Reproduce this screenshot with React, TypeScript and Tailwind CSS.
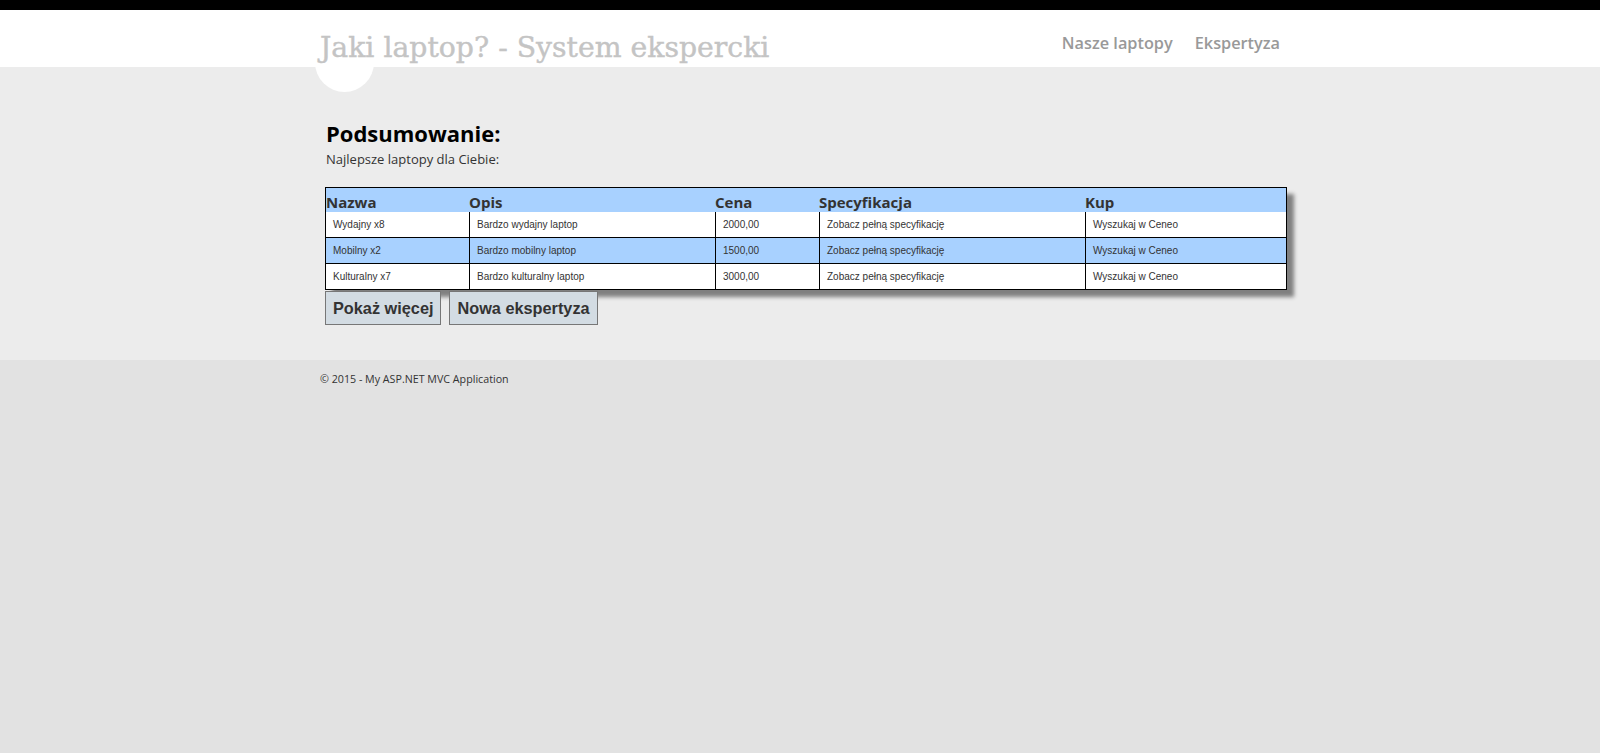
import React from "react";

const rows = [
  { name: "Wydajny x8", desc: "Bardzo wydajny laptop", price: "2000,00", alt: false },
  { name: "Mobilny x2", desc: "Bardzo mobilny laptop", price: "1500,00", alt: true },
  { name: "Kulturalny x7", desc: "Bardzo kulturalny laptop", price: "3000,00", alt: false },
];

const cols = "grid grid-cols-[143px_246px_104px_266px_199px]";

export default function App() {
  return (
    <div className="min-h-screen flex flex-col bg-[#e2e2e2]" style={{ fontFamily: "'Open Sans', sans-serif" }}>
      <div className="h-[10px] bg-black" />
      <header className="h-[57px] bg-white relative">
        <div className="w-[960px] mx-auto h-full flex justify-between relative">
          <div className="absolute left-[-5px] top-[23px] w-[59px] h-[59px] rounded-full bg-white" />
          <div
            className="relative mt-[20px] text-[28.3px] leading-[36px] text-[#c4c4c4] whitespace-nowrap [-webkit-text-stroke:0.4px_#c4c4c4]"
            style={{ fontFamily: "'DejaVu Serif', serif" }}
          >
            Jaki laptop? - System ekspercki
          </div>
          <nav className="flex gap-[22px] mt-[21px] text-[16.3px] leading-[24px] font-semibold text-[#999]">
            <span>Nasze laptopy</span>
            <span>Ekspertyza</span>
          </nav>
        </div>
      </header>
      <main className="bg-[#ececec] h-[293px]">
        <div className="w-[960px] mx-auto px-[5px] pt-[52px]">
          <h1 className="text-[22px] leading-[28px] font-bold text-black pl-[1px]">Podsumowanie:</h1>
          <p className="text-[13px] leading-[18px] text-[#333] pl-[1px] mt-[3px]">Najlepsze laptopy dla Ciebie:</p>
          <div className="mt-[19px] w-[962px] border border-black bg-white shadow-[7px_7px_4px_#808080]">
            <div className={`${cols} bg-[#a8d1ff] h-[24px] items-end text-[15px] leading-[20px] font-bold text-[#333]`}>
              <div>Nazwa</div>
              <div>Opis</div>
              <div>Cena</div>
              <div>Specyfikacja</div>
              <div>Kup</div>
            </div>
            {rows.map((r, i) => (
              <div
                key={r.name}
                className={`${cols} ${i > 0 ? "border-t border-black h-[26px]" : "h-[25px]"} ${r.alt ? "bg-[#a8d1ff]" : "bg-white"} text-[10px] text-[#333] items-stretch`}
                style={{ fontFamily: "'Liberation Sans', Arial, sans-serif" }}
              >
                <div className="flex items-center pl-[7px]">{r.name}</div>
                <div className="flex items-center pl-[7px] border-l border-black">{r.desc}</div>
                <div className="flex items-center pl-[7px] border-l border-black">{r.price}</div>
                <div className="flex items-center pl-[7px] border-l border-black">Zobacz pełną specyfikację</div>
                <div className="flex items-center pl-[7px] border-l border-black">Wyszukaj w Ceneo</div>
              </div>
            ))}
          </div>
          <div className="flex gap-[8px] mt-[1px]" style={{ fontFamily: "'Liberation Sans', Arial, sans-serif" }}>
            <button className="relative h-[34px] px-[7px] bg-[#d3dce3] border border-[#777] text-[16.3px] font-bold text-[#333]">
              Pokaż więcej
            </button>
            <button className="relative h-[34px] px-[7px] bg-[#d3dce3] border border-[#777] text-[16.3px] font-bold text-[#333]">
              Nowa ekspertyza
            </button>
          </div>
        </div>
      </main>
      <footer className="flex-1 bg-[#e2e2e2]">
        <div className="w-[960px] mx-auto pt-[10px] text-[10.7px] leading-[18px] text-[#333]">
          © 2015 - My ASP.NET MVC Application
        </div>
      </footer>
    </div>
  );
}
